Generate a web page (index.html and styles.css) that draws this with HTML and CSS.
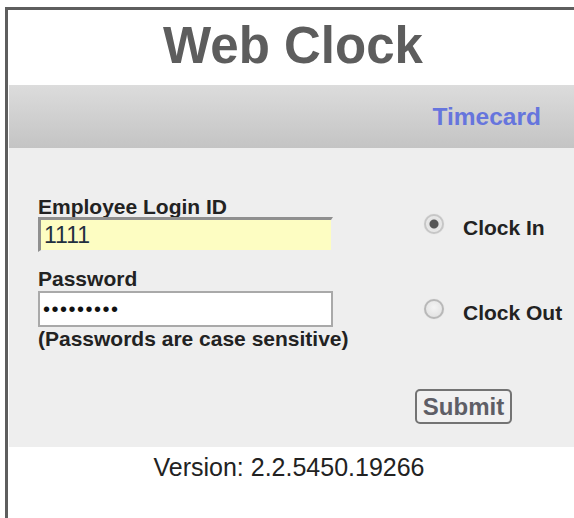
FILE: index.html
```html
<!DOCTYPE html>
<html lang="en">
<head>
<meta charset="utf-8">
<title>Web Clock</title>
<link rel="stylesheet" href="styles.css">
</head>
<body>
<div class="frame">
  <header class="masthead">
    <h1 class="title">Web Clock</h1>
  </header>
  <nav class="navbar">
    <a class="nav-link" href="#">Timecard</a>
  </nav>
  <form class="panel">
    <div class="credentials">
      <label class="field-label" for="login">Employee Login ID</label>
      <input class="field field-login" id="login" type="text" value="1111">
      <label class="field-label field-label-gap" for="pass">Password</label>
      <input class="field field-pass" id="pass" type="password" value="123456789">
      <div class="field-label">(Passwords are case sensitive)</div>
    </div>
    <div class="punch">
      <label class="punch-option">
        <input class="radio" type="radio" name="punch" checked>
        <span>Clock In</span>
      </label>
      <label class="punch-option punch-option-out">
        <input class="radio" type="radio" name="punch">
        <span>Clock Out</span>
      </label>
      <button class="submit" type="button">Submit</button>
    </div>
  </form>
  <footer class="version">Version: 2.2.5450.19266</footer>
</div>
</body>
</html>
```

FILE: styles.css
```css
html, body {
  margin: 0;
  padding: 0;
  background: #ffffff;
  overflow: hidden;
}

body {
  font-family: "Liberation Sans", Arial, sans-serif;
  color: #222222;
}

.frame {
  margin: 7px 0 0 5px;
  width: 568px;
  height: 520px;
  padding: 1px 0 0 1px;
  border-top: 3px solid #5e5e5e;
  border-left: 3px solid #5e5e5e;
  background: #ffffff;
}

.masthead {
  height: 74px;
  padding-top: 9px;
  box-sizing: border-box;
  text-align: center;
}

.title {
  margin: 0;
  font-size: 51px;
  line-height: 51px;
  font-weight: bold;
  color: #5d5d5d;
}

.navbar {
  height: 63px;
  display: flex;
  align-items: center;
  justify-content: flex-end;
  padding-right: 36px;
  background: linear-gradient(to bottom, #dcdcdc, #c4c4c4);
}

.nav-link {
  font-size: 24.5px;
  font-weight: bold;
  color: #6675dd;
  text-decoration: none;
}

.panel {
  margin: 0;
  height: 299px;
  box-sizing: border-box;
  padding: 48px 0 0 29px;
  display: flex;
  gap: 82px;
  background: #eeeeee;
}

.credentials {
  width: 295px;
  display: flex;
  flex-direction: column;
  align-items: flex-start;
}

.field-label {
  font-size: 21px;
  line-height: 21px;
  font-weight: bold;
  color: #222222;
  white-space: nowrap;
}

.field-label-gap {
  margin-top: 16px;
}

.field {
  box-sizing: border-box;
  width: 295px;
  height: 35px;
  margin: 0;
  padding: 1px 3px 0;
  font-family: "Liberation Sans", Arial, sans-serif;
  font-size: 23px;
  color: #1f2f3f;
  outline: none;
}

.field-login {
  background: #fdfdc2;
  border-style: solid;
  border-width: 3px 2px 2px 3px;
  border-color: #8f8f8f #eeeeee #eeeeee #8f8f8f;
}

.field-pass {
  margin-top: 2px;
  margin-bottom: 1px;
  height: 36px;
  background: #ffffff;
  border: 2px solid #a9a9a9;
  font-size: 20px;
  letter-spacing: 1.5px;
  color: #111111;
}

.punch {
  display: flex;
  flex-direction: column;
  align-items: flex-start;
  padding-top: 20px;
}

.punch-option {
  display: flex;
  align-items: flex-start;
  gap: 19px;
  margin-left: 9px;
  font-size: 21px;
  line-height: 24px;
  font-weight: bold;
  color: #222222;
}

.punch-option-out {
  margin-top: 61px;
}

.radio {
  appearance: none;
  -webkit-appearance: none;
  box-sizing: border-box;
  width: 20px;
  height: 20px;
  margin: -2px 0 0;
  border-radius: 50%;
  border: 2px solid #b8b8b8;
  background: radial-gradient(circle at 50% 40%, #f4f4f4, #dedede);
  box-shadow: 0 0 1px #cfcfcf;
}

.radio:checked {
  background: radial-gradient(circle, #555555 0 4px, #e2e2e2 5px, #f2f2f2 100%);
  border-color: #c6c6c6;
}

.submit {
  margin: 64px 0 0 0;
  box-sizing: border-box;
  width: 97px;
  height: 35px;
  padding: 0;
  border: 2px solid #737373;
  border-radius: 5px;
  background: #f1f1f1;
  font-family: "Liberation Sans", Arial, sans-serif;
  font-size: 24px;
  font-weight: bold;
  color: #5e5e66;
}

.version {
  padding-top: 5px;
  padding-right: 8px;
  text-align: center;
  font-size: 25px;
  line-height: 30px;
  color: #222222;
}
```
